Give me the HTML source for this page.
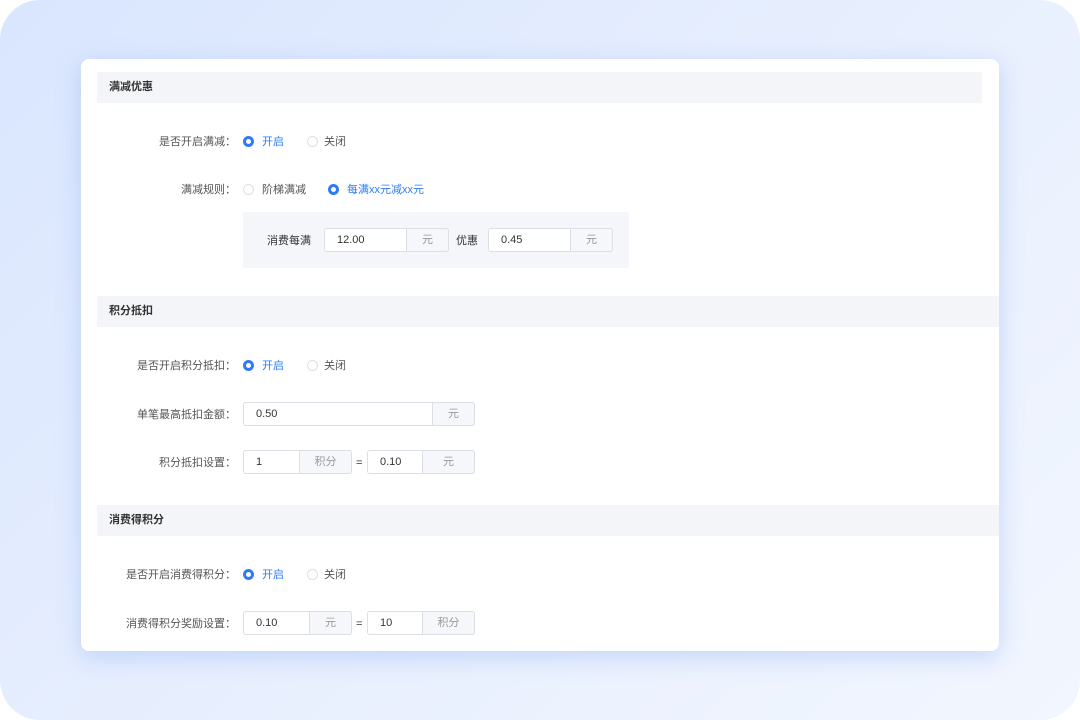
<!DOCTYPE html>
<html><head><meta charset="utf-8"><style>
*{margin:0;padding:0;box-sizing:border-box}
html,body{width:1080px;height:720px;background:#fff;overflow:hidden}
body{font-family:"Liberation Sans","Noto Sans CJK SC",sans-serif;font-size:11px;color:#555}
#bg{position:absolute;left:0;top:0;width:1080px;height:720px;border-radius:40px;background:linear-gradient(135deg,#d9e6fe 0%,#e6eefe 45%,#f2f6fe 100%)}
#card{position:absolute;left:81px;top:59px;width:918px;height:592px;background:#fff;border-radius:8px;box-shadow:0 6px 24px rgba(120,160,240,.35)}
.a{position:absolute}
.hd{position:absolute;height:31px;background:#f3f5f8;font-weight:bold;color:#333;font-size:11px;line-height:31px;padding-left:12px}
.lb{position:absolute;left:0;width:236px;text-align:right;line-height:14px;color:#555}
.r{position:absolute;width:11px;height:11px;border-radius:50%;border:1px solid #dcdfe6;background:#fff}
.r.on{border:3px solid #2d7cf6}
.t{position:absolute;line-height:14px}
.blue{color:#2d7cf6}
.in{position:absolute;height:24px;border:1px solid #dcdfe6;border-radius:3px;background:#fff;line-height:22px;padding-left:12px;color:#333}
.ad{position:absolute;top:-1px;right:-1px;height:24px;border:1px solid #dcdfe6;border-radius:0 3px 3px 0;background:#f5f7fa;color:#999;text-align:center;line-height:22px}
</style></head><body>
<div id="bg"></div>
<div id="card"></div>

<div class="hd" style="left:97px;top:72px;width:885px">满减优惠</div>
<div class="lb" style="top:135px">是否开启满减：</div>
<div class="r on" style="left:243px;top:136px"></div><div class="t blue" style="left:262px;top:135px">开启</div>
<div class="r" style="left:307px;top:136px"></div><div class="t" style="left:324px;top:135px">关闭</div>
<div class="lb" style="top:183px">满减规则：</div>
<div class="r" style="left:243px;top:184px"></div><div class="t" style="left:262px;top:183px">阶梯满减</div>
<div class="r on" style="left:328px;top:184px"></div><div class="t blue" style="left:347px;top:183px">每满xx元减xx元</div>
<div class="a" style="left:243px;top:212px;width:386px;height:56px;background:#f4f6f9"></div>
<div class="t" style="left:267px;top:234px;color:#333">消费每满</div>
<div class="in" style="left:324px;top:228px;width:125px">12.00<div class="ad" style="width:43px">元</div></div>
<div class="t" style="left:456px;top:234px;color:#333">优惠</div>
<div class="in" style="left:488px;top:228px;width:125px">0.45<div class="ad" style="width:43px">元</div></div>

<div class="hd" style="left:97px;top:296px;width:902px">积分抵扣</div>
<div class="lb" style="top:359px">是否开启积分抵扣：</div>
<div class="r on" style="left:243px;top:360px"></div><div class="t blue" style="left:262px;top:359px">开启</div>
<div class="r" style="left:307px;top:360px"></div><div class="t" style="left:324px;top:359px">关闭</div>
<div class="lb" style="top:408px">单笔最高抵扣金额：</div>
<div class="in" style="left:243px;top:402px;width:232px">0.50<div class="ad" style="width:43px">元</div></div>
<div class="lb" style="top:456px">积分抵扣设置：</div>
<div class="in" style="left:243px;top:450px;width:109px">1<div class="ad" style="width:53px">积分</div></div>
<div class="t" style="left:356px;top:456px;color:#333">=</div>
<div class="in" style="left:367px;top:450px;width:108px">0.10<div class="ad" style="width:53px">元</div></div>

<div class="hd" style="left:97px;top:505px;width:902px">消费得积分</div>
<div class="lb" style="top:568px">是否开启消费得积分：</div>
<div class="r on" style="left:243px;top:569px"></div><div class="t blue" style="left:262px;top:568px">开启</div>
<div class="r" style="left:307px;top:569px"></div><div class="t" style="left:324px;top:568px">关闭</div>
<div class="lb" style="top:617px">消费得积分奖励设置：</div>
<div class="in" style="left:243px;top:611px;width:109px">0.10<div class="ad" style="width:43px">元</div></div>
<div class="t" style="left:356px;top:617px;color:#333">=</div>
<div class="in" style="left:367px;top:611px;width:108px">10<div class="ad" style="width:53px">积分</div></div>
</body></html>
